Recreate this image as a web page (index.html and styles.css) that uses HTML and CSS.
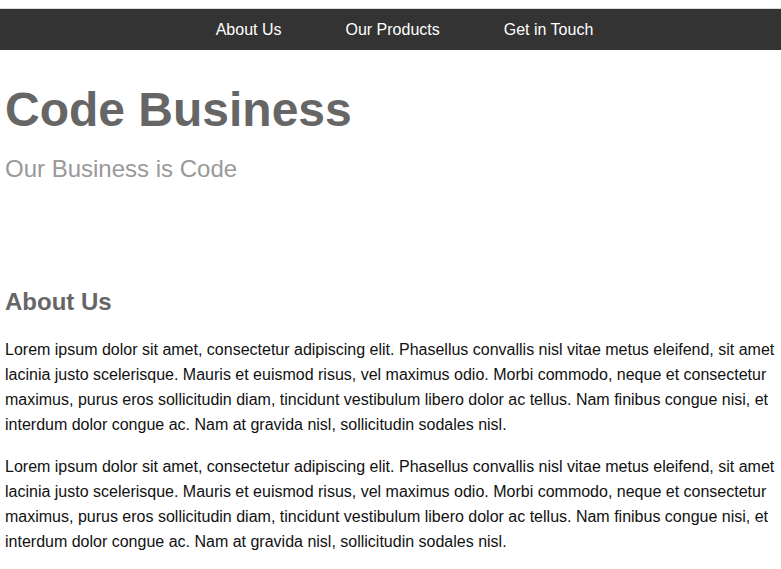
FILE: index.html
```html
<!DOCTYPE html>
<html>
<head>
<meta charset="utf-8">
<title>Code Business</title>
<link rel="stylesheet" href="styles.css">
</head>
<body>
<div class="topline"></div>
<nav class="nav">
  <a href="#about" class="nav-link">About Us</a>
  <a href="#products" class="nav-link">Our Products</a>
  <a href="#contact" class="nav-link">Get in Touch</a>
</nav>
<header class="hero">
  <h1 class="title">Code Business</h1>
  <p class="subtitle">Our Business is Code</p>
</header>
<section class="content" id="about">
  <h2 class="section-title">About Us</h2>
  <p class="text">Lorem ipsum dolor sit amet, consectetur adipiscing elit. Phasellus convallis nisl vitae metus eleifend, sit amet lacinia justo scelerisque. Mauris et euismod risus, vel maximus odio. Morbi commodo, neque et consectetur maximus, purus eros sollicitudin diam, tincidunt vestibulum libero dolor ac tellus. Nam finibus congue nisi, et interdum dolor congue ac. Nam at gravida nisl, sollicitudin sodales nisl.</p>
  <p class="text">Lorem ipsum dolor sit amet, consectetur adipiscing elit. Phasellus convallis nisl vitae metus eleifend, sit amet lacinia justo scelerisque. Mauris et euismod risus, vel maximus odio. Morbi commodo, neque et consectetur maximus, purus eros sollicitudin diam, tincidunt vestibulum libero dolor ac tellus. Nam finibus congue nisi, et interdum dolor congue ac. Nam at gravida nisl, sollicitudin sodales nisl.</p>
</section>
</body>
</html>
```

FILE: styles.css
```css
html, body {
  margin: 0;
  padding: 0;
  background: #fff;
  font-family: "Liberation Sans", Arial, sans-serif;
}
.topline {
  height: 9px;
  border-bottom: 1px solid #dcdcdc;
  box-sizing: border-box;
}
.nav {
  background: #333;
  height: 41px;
  padding: 1px 0 0 28px;
  box-sizing: border-box;
  display: flex;
  justify-content: center;
  align-items: center;
}
.nav-link {
  color: #fff;
  text-decoration: none;
  font-size: 16px;
  padding: 0 32px;
}
.hero {
  padding: 32px 5px 0;
}
.title {
  margin: 0;
  font-size: 48px;
  line-height: 1.15;
  font-weight: bold;
  color: #666;
}
.subtitle {
  margin: 18px 0 0;
  font-size: 24px;
  line-height: 1.15;
  color: #999;
}
.content {
  padding: 105px 5px 0;
}
.section-title {
  margin: 0;
  font-size: 24px;
  line-height: 1.15;
  font-weight: bold;
  color: #666;
}
.text {
  margin: 22px 0 0;
  font-size: 16px;
  line-height: 25px;
  color: #111;
}
.text + .text {
  margin-top: 17px;
}
```
